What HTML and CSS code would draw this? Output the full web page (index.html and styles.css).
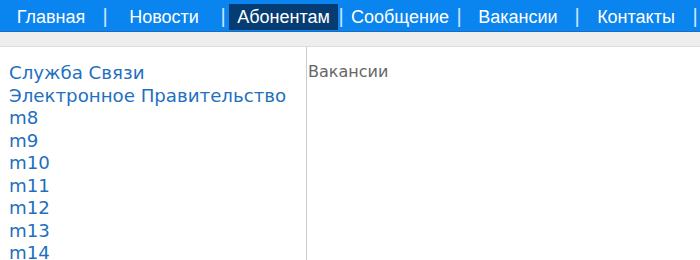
FILE: index.html
```html
<!DOCTYPE html>
<html lang="ru">
<head>
<meta charset="utf-8">
<title>Вакансии</title>
<link rel="stylesheet" href="styles.css">
</head>
<body>
<nav class="topnav">
  <ul class="menu">
    <li class="item item-first"><a class="link" href="#">Главная</a><span class="sep">|</span></li>
    <li class="item"><a class="link" href="#">Новости</a><span class="sep">|</span></li>
    <li class="item"><a class="link active" href="#">Абонентам</a><span class="sep">|</span></li>
    <li class="item"><a class="link" href="#">Сообщение</a><span class="sep">|</span></li>
    <li class="item"><a class="link" href="#">Вакансии</a><span class="sep">|</span></li>
    <li class="item"><a class="link" href="#">Контакты</a><span class="sep">|</span></li>
  </ul>
</nav>
<div class="strip"></div>
<main class="page">
  <aside class="sidebar">
    <a class="side-link" href="#">Служба Связи</a>
    <a class="side-link" href="#">Электронное Правительство</a>
    <a class="side-link" href="#">m8</a>
    <a class="side-link" href="#">m9</a>
    <a class="side-link" href="#">m10</a>
    <a class="side-link" href="#">m11</a>
    <a class="side-link" href="#">m12</a>
    <a class="side-link" href="#">m13</a>
    <a class="side-link" href="#">m14</a>
  </aside>
  <section class="content">
    <div class="content-title">Вакансии</div>
  </section>
</main>
</body>
</html>
```
FILE: styles.css
```css
html, body {
  margin: 0;
  padding: 0;
  background: #ffffff;
}
body {
  font-family: "DejaVu Sans", Verdana, sans-serif;
  overflow: hidden;
}
.topnav {
  background: #0a84ee;
  height: 31px;
  border-bottom: 1px solid #1a6cc0;
}
.menu {
  list-style: none;
  margin: 0;
  padding: 0;
  display: flex;
  height: 31px;
  font-family: "Liberation Sans", Arial, sans-serif;
  font-size: 18px;
}
.item {
  display: flex;
  align-items: stretch;
  width: 118px;
  flex-shrink: 0;
}
.item-first {
  width: 108px;
}
.link {
  flex: 1;
  display: flex;
  align-items: center;
  justify-content: center;
  color: #ffffff;
  text-decoration: none;
  margin: 4px 0 1px;
  padding-top: 1px;
  white-space: nowrap;
}
.link.active {
  background: #053c73;
  margin-left: 3px;
}
.sep {
  color: #cfe6ff;
  display: flex;
  align-items: center;
  width: 6px;
  justify-content: center;
  font-size: 20px;
  padding-top: 2px;
}
.strip {
  height: 14px;
  background: #eeeeee;
  border-bottom: 1px solid #dddddd;
}
.page {
  display: flex;
  min-height: 220px;
}
.sidebar {
  width: 297px;
  padding: 15px 0 0 9px;
  border-right: 1px solid #cccccc;
  display: flex;
  flex-direction: column;
}
.side-link {
  color: #1f6fc0;
  text-decoration: none;
  font-size: 18.2px;
  line-height: 22.5px;
}
.content {
  flex: 1;
  padding: 15px 0 0 1px;
}
.content-title {
  color: #666666;
  font-size: 16px;
  line-height: 19px;
}
```
